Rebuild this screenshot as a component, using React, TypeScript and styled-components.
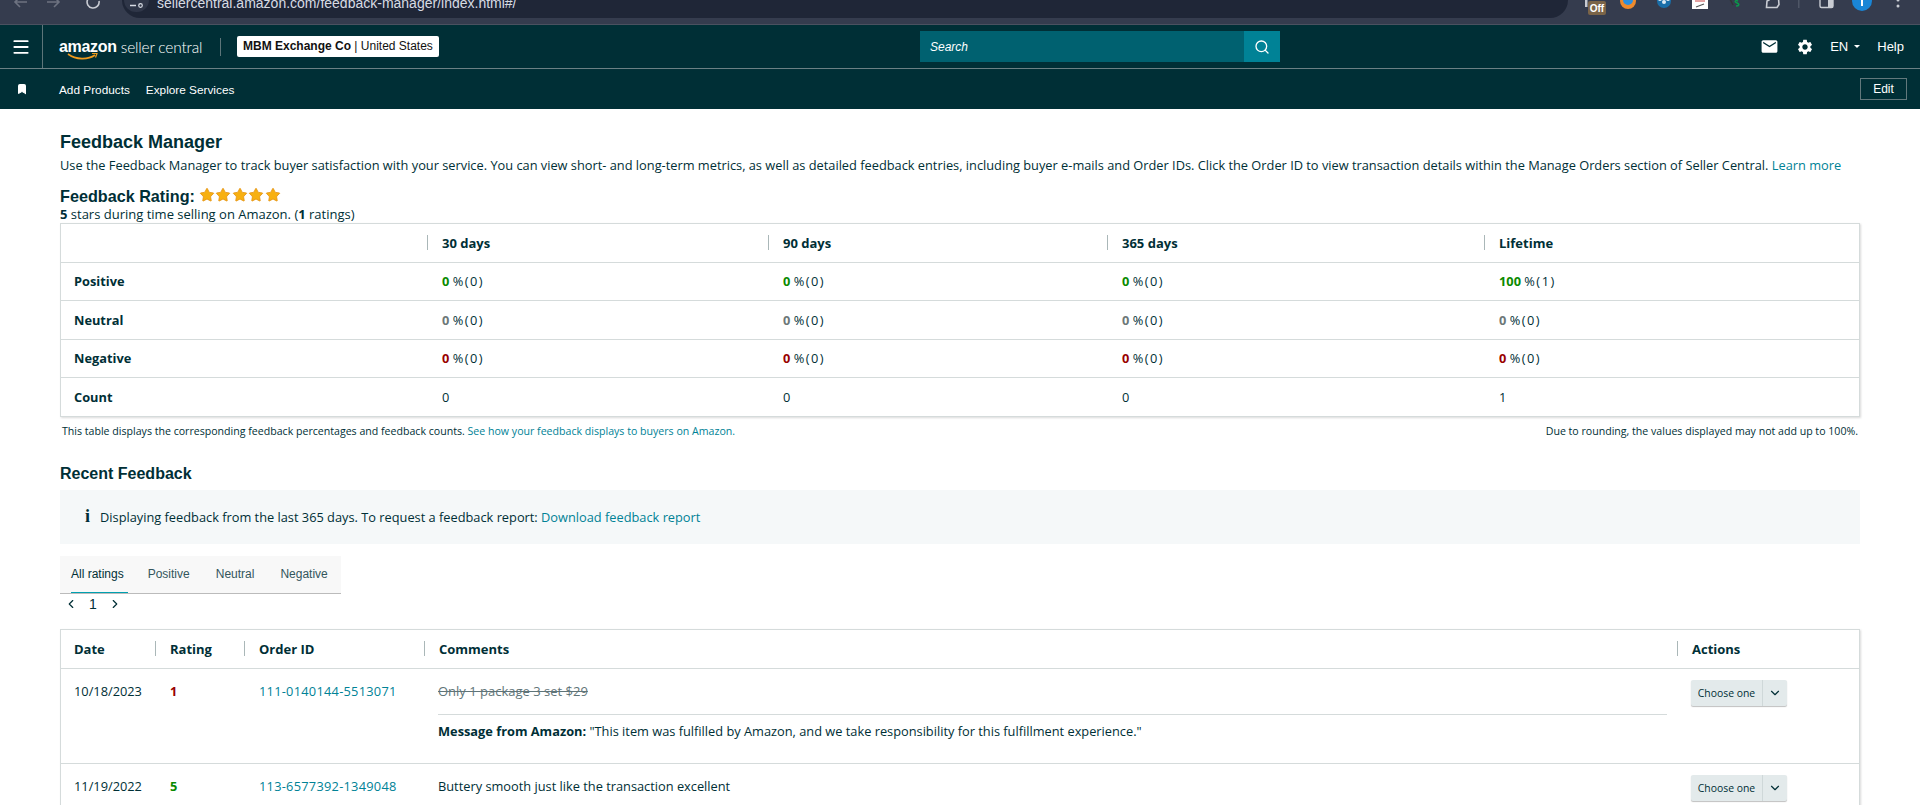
import React from 'react';
import styled, { createGlobalStyle } from 'styled-components';
import { Bookmark, ChevronDown, ChevronLeft, ChevronRight, Menu, Search, Star } from 'lucide-react';

const GlobalStyle = createGlobalStyle`
  html, body {
    margin: 0;
    padding: 0;
    height: 805px;
    overflow: hidden;
    background: #fff;
  }
`;

const BODY_FONT = `"Open Sans", "DejaVu Sans", sans-serif`;
const NAV_FONT = `"Liberation Sans", Arial, sans-serif`;

const Page = styled.div`
  width: 1920px;
  height: 805px;
  overflow: hidden;
  font-family: ${BODY_FONT};
  color: #002f36;
`;

/* browser chrome, cut off at the top of the shot */
const ChromeBar = styled.div`
  height: 24px;
  background: #353c4e;
  border-bottom: 1px solid #4b5160;
  display: flex;
  align-items: flex-start;
  overflow: hidden;
`;

const ChromeDrawing = styled.svg`
  flex: none;
  display: block;
`;

const Omnibox = styled.div`
  width: 1446px;
  flex: none;
  height: 18px;
  background: #1f2637;
  border-radius: 0 0 18px 18px;
  overflow: hidden;
  display: flex;
  align-items: flex-start;
  font: 14px/18px ${NAV_FONT};
  color: #d7dbe3;
  box-sizing: border-box;
`;

const SiteChip = styled.div`
  width: 25px;
  height: 12px;
  flex: none;
  margin-left: 2px;
  background: #2f3648;
  border-radius: 0 0 12px 12px;
  display: flex;
  align-items: flex-end;
  justify-content: center;
  padding-bottom: 4px;
  box-sizing: border-box;
`;

const UrlText = styled.div`
  margin: -6px 0 0 8px;
`;

const Nav = styled.div`
  height: 43px;
  background: #002f36;
  border-bottom: 1px solid #6b8084;
  display: flex;
  align-items: center;
  color: #fff;
  font-family: ${NAV_FONT};
`;

const Burger = styled.div`
  width: 42px;
  height: 100%;
  border-right: 1px solid #5d7579;
  display: flex;
  align-items: center;
  justify-content: center;
`;

const Logo = styled.div`
  margin-left: 16px;
  width: 143px;
  position: relative;
  display: flex;
  align-items: center;
  gap: 4px;
  white-space: nowrap;
`;

const LogoMark = styled.b`
  font-size: 16px;
  font-weight: 700;
  letter-spacing: -0.3px;
`;

const LogoName = styled.span`
  font: 300 15.5px "Lato", ${NAV_FONT};
  letter-spacing: -0.2px;
`;

const LogoSmile = styled.svg`
  position: absolute;
  left: 8px;
  top: 15px;
`;

const NavDivider = styled.div`
  width: 1px;
  height: 18px;
  background: #5d7579;
  margin: 0 16px 0 18px;
`;

const StoreBadge = styled.div`
  background: #fff;
  color: #111;
  border-radius: 2px;
  width: 202px;
  height: 21px;
  line-height: 21px;
  padding-left: 6px;
  box-sizing: border-box;
  font-size: 12px;
  white-space: nowrap;
  b { font-weight: 700; }
`;

const SearchBox = styled.div`
  margin-left: 481px;
  width: 360px;
  height: 31px;
  background: #006170;
  display: flex;
  align-items: center;
  justify-content: space-between;
  font: italic 12px ${NAV_FONT};
  padding-left: 10px;
  box-sizing: border-box;
`;

const SearchButton = styled.div`
  width: 36px;
  height: 31px;
  background: #008296;
  display: flex;
  align-items: center;
  justify-content: center;
`;

const NavRight = styled.div`
  margin-left: auto;
  display: flex;
  align-items: center;
  padding-right: 16px;
  font-size: 13px;
`;

const NavIcon = styled.svg<{ $gap: number }>`
  display: block;
  fill: #fff;
  margin-right: ${(p) => p.$gap}px;
`;

const Language = styled.span`
  display: flex;
  align-items: center;
  margin-right: 17px;
  &::after {
    content: '';
    margin-left: 6px;
    border-left: 3.5px solid transparent;
    border-right: 3.5px solid transparent;
    border-top: 3.5px solid #fff;
  }
`;

const SubNav = styled.div`
  height: 40px;
  background: #002f36;
  display: flex;
  align-items: center;
  color: #fff;
  font: 11.8px ${NAV_FONT};
`;

const PinCell = styled.div`
  width: 59px;
  padding-left: 16px;
  box-sizing: border-box;
  display: flex;
`;

const SubLink = styled.span`
  margin-right: 16px;
  padding-top: 2px;
`;

const EditButton = styled.div`
  margin-left: auto;
  margin-right: 13px;
  width: 47px;
  height: 22px;
  box-sizing: border-box;
  border: 1px solid #62787c;
  font-size: 12px;
  text-align: center;
  line-height: 20px;
`;

const Content = styled.div`
  padding: 23px 0 0 60px;
  width: 1860px;
  box-sizing: border-box;
`;

const Heading = styled.div`
  font-size: 18px;
  line-height: 20px;
  font-weight: 700;
  font-family: ${NAV_FONT};
`;

const Intro = styled.div`
  font-size: 12.8px;
  line-height: 18px;
  margin-top: 4px;
  white-space: nowrap;
`;

const Link = styled.a`
  color: #008296;
  text-decoration: none;
`;

const OrderLink = styled(Link)`
  letter-spacing: 0.26px;
`;

const RatingLine = styled.div`
  display: flex;
  align-items: center;
  margin-top: 13px;
  font: 700 16.2px/18px ${NAV_FONT};
`;

const Stars = styled.span`
  display: inline-flex;
  gap: 0.5px;
  margin-left: 4px;
  margin-top: -3px;
`;

const RatingNote = styled.div`
  font-size: 13px;
  line-height: 14px;
  margin-top: 2px;
`;

const Card = styled.div`
  border: 1px solid #d5dbdb;
  box-shadow: 1px 1px 2px rgba(0, 0, 0, 0.15);
`;

const SummaryCard = styled(Card)`
  margin-top: 2px;
`;

const Row = styled.div<{ $cols: string; $height: number }>`
  display: grid;
  grid-template-columns: ${(p) => p.$cols};
  min-height: ${(p) => p.$height}px;
  border-bottom: 1px solid #d5dbdb;
  &:last-child { border-bottom: none; }
`;

const HeadCell = styled.div<{ $divider?: boolean }>`
  position: relative;
  font-size: 13px;
  font-weight: 700;
  padding-left: ${(p) => (p.$divider ? 15 : 13)}px;
  display: flex;
  align-items: center;
  &::before {
    content: '';
    display: ${(p) => (p.$divider ? 'block' : 'none')};
    position: absolute;
    left: 0;
    top: 11px;
    bottom: 12px;
    width: 1px;
    background: #aab7b8;
  }
`;

const Cell = styled.div<{ $bold?: boolean; $top?: boolean; $first?: boolean }>`
  font-size: 12.8px;
  font-weight: ${(p) => (p.$bold ? 700 : 400)};
  padding-left: ${(p) => (p.$first ? 13 : 15)}px;
  display: flex;
  align-items: ${(p) => (p.$top ? 'flex-start' : 'center')};
  padding-top: ${(p) => (p.$top ? 13 : 0)}px;
  line-height: 18px;
  white-space: pre;
`;

const Value = styled.b<{ $tone: string }>`
  color: ${(p) => p.$tone};
`;

const Percent = styled.span`
  letter-spacing: 1.5px;
`;

const Footnote = styled.div`
  display: flex;
  justify-content: space-between;
  font-size: 10.6px;
  line-height: 14px;
  margin-top: 7px;
  padding: 0 2px;
`;

const SubHeading = styled(Heading)`
  font-size: 16px;
  margin-top: 26px;
`;

const Notice = styled.div`
  background: #f5f8f9;
  height: 54px;
  margin-top: 6px;
  display: flex;
  align-items: center;
  padding-left: 25px;
  font-size: 12.8px;
`;

const NoticeIcon = styled.span`
  font: 700 18px "Liberation Serif", serif;
  margin-right: 10px;
`;

const Tabs = styled.div`
  display: flex;
  width: 281px;
  height: 38px;
  margin-top: 12px;
  background: #f8f8f8;
  border-bottom: 1px solid #bbb;
  font: 12px ${NAV_FONT};
  padding-left: 11px;
  box-sizing: border-box;
  gap: 26px;
`;

const Tab = styled.div<{ $active?: boolean }>`
  height: 37px;
  box-sizing: border-box;
  line-height: 36px;
  padding-right: ${(p) => (p.$active ? 4 : 0)}px;
  margin-right: ${(p) => (p.$active ? -6 : 0)}px;
  color: ${(p) => (p.$active ? '#002f36' : '#33565c')};
  border-bottom: ${(p) => (p.$active ? '1px solid #00a0b0' : 'none')};
`;

const Pager = styled.div`
  display: flex;
  align-items: center;
  height: 20px;
  padding-left: 4px;
  font: 14px ${NAV_FONT};
  gap: 11px;
`;

const FeedbackCard = styled(Card)`
  margin-top: 15px;
`;

const Strike = styled.span`
  font-size: 13px;
  text-decoration: line-through;
  color: #5f7478;
`;

const CommentCell = styled.div`
  font-size: 12.8px;
  line-height: 18px;
  padding: 13px 10px 0 14px;
`;

const CommentRule = styled.div`
  height: 1px;
  background: #d5dbdb;
  margin: 14px 0 7px;
`;

const SplitButton = styled.div`
  display: inline-flex;
  height: 26px;
  background: #e3eaeb;
  border-radius: 2px;
  box-shadow: 0 1px 1px rgba(0, 0, 0, 0.25);
  font-size: 10.4px;
  align-items: center;
  margin: 11px 0 0 14px;
`;

const SplitLabel = styled.span`
  width: 72px;
  box-sizing: border-box;
  text-align: center;
  border-right: 1px solid #cfd8d9;
  line-height: 26px;
`;

const SplitCaret = styled.span`
  width: 24px;
  display: flex;
  justify-content: center;
`;

const SummaryCols = '366px 341px 339px 377px 1fr';
const FeedbackCols = '94px 89px 180px 1253px 1fr';

const summary = [
  { label: 'Positive', tone: '#0a8a00', values: ['0 ', '0 ', '0 ', '100 '], counts: [0, 0, 0, 1] },
  { label: 'Neutral', tone: '#6c7778', values: ['0 ', '0 ', '0 ', '0 '], counts: [0, 0, 0, 0] },
  { label: 'Negative', tone: '#990000', values: ['0 ', '0 ', '0 ', '0 '], counts: [0, 0, 0, 0] },
];

const Choose = () => (
  <SplitButton>
    <SplitLabel>Choose one</SplitLabel>
    <SplitCaret>
      <ChevronDown size={14} strokeWidth={2} />
    </SplitCaret>
  </SplitButton>
);

const ChromeLeft = () => (
  <ChromeDrawing width="122" height="24" viewBox="0 0 122 24" fill="none">
    <path d="M27 2H15M20 -3l-5 5 5 5" stroke="#6d7280" strokeWidth="1.6" />
    <path d="M47 2h12M54 -3l5 5-5 5" stroke="#6d7280" strokeWidth="1.6" />
    <path d="M99 1a6 6 0 1 1-2-3.5" stroke="#c9ccd3" strokeWidth="1.6" />
  </ChromeDrawing>
);

const ChromeTray = () => (
  <ChromeDrawing width="352" height="24" viewBox="1568 0 352 24" fill="none">
    <rect x="1585" y="-3" width="2.5" height="10" fill="#c9ccd3" />
    <rect x="1588" y="1" width="18" height="14" rx="2" fill="#7a6448" />
    <text x="1597" y="12" textAnchor="middle" fill="#fff" fontFamily="Liberation Sans" fontWeight="700" fontSize="10">Off</text>
    <circle cx="1628" cy="1" r="8" fill="#ee8a2d" />
    <circle cx="1628" cy="0" r="5" fill="#2a8fe0" />
    <circle cx="1664" cy="1" r="7" fill="#1a6ea8" />
    <circle cx="1664" cy="2" r="2" fill="#dfeaf2" />
    <circle cx="1660" cy="-1" r="2" fill="#dfeaf2" />
    <circle cx="1668" cy="-1" r="2" fill="#dfeaf2" />
    <rect x="1692" y="-2" width="16" height="11" fill="#fff" />
    <path d="M1696 7l8-3" stroke="#555" strokeWidth="1.2" />
    <path d="M1695 1h10" stroke="#c44" strokeWidth="1" />
    <path d="M1730 -1l3 6" stroke="#333" strokeWidth="1.4" />
    <path d="M1738 1c-3-1-4 1-1 2s2 3-1 3" stroke="#0a9a4a" strokeWidth="1.4" />
    <path d="M1769 -2v2l-2 1-.5 6.500h10.500l2-3-.5-6" stroke="#c9ccd3" strokeWidth="1.6" />
    <rect x="1798" y="-2" width="1.500" height="10" fill="#4f5666" />
    <rect x="1820" y="-3" width="13" height="10.500" rx="1.500" stroke="#c9ccd3" strokeWidth="1.4" />
    <rect x="1828" y="-3" width="5" height="10.500" fill="#c9ccd3" />
    <circle cx="1862" cy="1" r="10" fill="#1a86d6" />
    <rect x="1861" y="-2" width="2" height="8" fill="#fff" />
    <circle cx="1898" cy="0" r="1.500" fill="#c9ccd3" />
    <circle cx="1898" cy="6" r="1.500" fill="#c9ccd3" />
  </ChromeDrawing>
);

export default function App() {
  return (
    <Page>
      <GlobalStyle />
      <ChromeBar>
        <ChromeLeft />
        <Omnibox>
          <SiteChip>
            <svg width="14" height="5" viewBox="0 0 14 5" fill="none">
              <path d="M0 2.500h6" stroke="#d7dbe3" strokeWidth="1.6" />
              <circle cx="10.500" cy="2.500" r="1.800" stroke="#d7dbe3" strokeWidth="1.2" />
            </svg>
          </SiteChip>
          <UrlText>sellercentral.amazon.com/feedback-manager/index.html#/</UrlText>
        </Omnibox>
        <ChromeTray />
      </ChromeBar>
      <Nav>
        <Burger>
          <Menu size={20} color="#fff" strokeWidth={2.2} />
        </Burger>
        <Logo>
          <LogoMark>amazon</LogoMark>
          <LogoName>seller central</LogoName>
          <LogoSmile width="32" height="8" viewBox="0 0 32 8" fill="none">
            <path d="M1 1c8 6 20 6 27 1" stroke="#f29b1d" strokeWidth="1.6" />
            <path d="M25 0.500l5 0-1.500 4" stroke="#f29b1d" strokeWidth="1.2" />
          </LogoSmile>
        </Logo>
        <NavDivider />
        <StoreBadge>
          <b>MBM Exchange Co</b> | United States
        </StoreBadge>
        <SearchBox>
          Search
          <SearchButton>
            <Search size={16} color="#fff" />
          </SearchButton>
        </SearchBox>
        <NavRight>
          <NavIcon $gap={17} width="19" height="19" viewBox="0 0 24 24">
            <path d="M20 4H4c-1.1 0-2 .9-2 2v12c0 1.100.9 2 2 2h16c1.100 0 2-.9 2-2V6c0-1.100-.9-2-2-2zm0 4l-8 5-8-5V6l8 5 8-5v2z" />
          </NavIcon>
          <NavIcon $gap={16} width="18" height="18" viewBox="0 0 24 24">
            <path d="M19.140 12.940c.04-.3.06-.61.06-.94 0-.32-.02-.64-.07-.94l2.030-1.580c.18-.14.23-.41.12-.61l-1.920-3.320c-.12-.22-.37-.29-.59-.22l-2.390.96c-.5-.38-1.030-.7-1.620-.94l-.36-2.540c-.04-.24-.24-.41-.48-.41h-3.840c-.24 0-.43.17-.47.41l-.36 2.540c-.59.24-1.130.57-1.620.94l-2.390-.96c-.22-.08-.47 0-.59.22L2.740 8.870c-.12.21-.08.47.12.61l2.030 1.580c-.05.3-.09.63-.09.94s.02.64.07.94l-2.030 1.580c-.18.14-.23.41-.12.61l1.920 3.320c.12.22.37.29.59.22l2.390-.96c.5.38 1.030.7 1.620.94l.36 2.540c.05.24.24.41.48.41h3.840c.24 0 .44-.17.47-.41l.36-2.540c.59-.24 1.130-.56 1.620-.94l2.390.96c.22.08.47 0 .59-.22l1.920-3.320c.12-.22.07-.47-.12-.61l-2.010-1.580zM12 15.600c-1.980 0-3.600-1.620-3.600-3.600s1.620-3.600 3.600-3.600 3.600 1.620 3.600 3.600-1.620 3.600-3.600 3.600z" />
          </NavIcon>
          <Language>EN</Language>
          <span>Help</span>
        </NavRight>
      </Nav>
      <SubNav>
        <PinCell>
          <Bookmark size={12} fill="#fff" color="#fff" />
        </PinCell>
        <SubLink>Add Products</SubLink>
        <SubLink>Explore Services</SubLink>
        <EditButton>Edit</EditButton>
      </SubNav>
      <Content>
        <Heading>Feedback Manager</Heading>
        <Intro>
          Use the Feedback Manager to track buyer satisfaction with your service. You can view short- and long-term metrics, as well as detailed feedback entries, including buyer e-mails and Order IDs. Click the Order ID to view transaction details within the Manage Orders section of Seller Central. <Link>Learn more</Link>
        </Intro>
        <RatingLine>
          Feedback Rating:
          <Stars>
            {[0, 1, 2, 3, 4].map((i) => (
              <Star key={i} size={16} fill="#f7b011" color="#e38f0c" strokeWidth={1.2} />
            ))}
          </Stars>
        </RatingLine>
        <RatingNote>
          <b>5</b> stars during time selling on Amazon. (<b>1</b> ratings)
        </RatingNote>
        <SummaryCard>
          <Row $cols={SummaryCols} $height={37.5}>
            <HeadCell />
            <HeadCell $divider>30 days</HeadCell>
            <HeadCell $divider>90 days</HeadCell>
            <HeadCell $divider>365 days</HeadCell>
            <HeadCell $divider>Lifetime</HeadCell>
          </Row>
          {summary.map((r) => (
            <Row key={r.label} $cols={SummaryCols} $height={37.5}>
              <Cell $bold $first>{r.label}</Cell>
              {r.values.map((v, i) => (
                <Cell key={i}>
                  <Value $tone={r.tone}>{v}</Value>
                  <Percent>%({r.counts[i]})</Percent>
                </Cell>
              ))}
            </Row>
          ))}
          <Row $cols={SummaryCols} $height={37.5}>
            <Cell $bold $first>Count</Cell>
            <Cell>0</Cell>
            <Cell>0</Cell>
            <Cell>0</Cell>
            <Cell>1</Cell>
          </Row>
        </SummaryCard>
        <Footnote>
          <span>
            This table displays the corresponding feedback percentages and feedback counts. <Link>See how your feedback displays to buyers on Amazon.</Link>
          </span>
          <span>Due to rounding, the values displayed may not add up to 100%.</span>
        </Footnote>
        <SubHeading>Recent Feedback</SubHeading>
        <Notice>
          <NoticeIcon>i</NoticeIcon>
          Displaying feedback from the last 365 days. To request a feedback report:&nbsp;<Link>Download feedback report</Link>
        </Notice>
        <Tabs>
          <Tab $active>All ratings</Tab>
          <Tab>Positive</Tab>
          <Tab>Neutral</Tab>
          <Tab>Negative</Tab>
        </Tabs>
        <Pager>
          <ChevronLeft size={14} strokeWidth={2} />
          1
          <ChevronRight size={14} strokeWidth={2} />
        </Pager>
        <FeedbackCard>
          <Row $cols={FeedbackCols} $height={38}>
            <HeadCell>Date</HeadCell>
            <HeadCell $divider>Rating</HeadCell>
            <HeadCell $divider>Order ID</HeadCell>
            <HeadCell $divider>Comments</HeadCell>
            <HeadCell $divider>Actions</HeadCell>
          </Row>
          <Row $cols={FeedbackCols} $height={94}>
            <Cell $top $first>10/18/2023</Cell>
            <Cell $top>
              <Value $tone="#990000">1</Value>
            </Cell>
            <Cell $top>
              <OrderLink>111-0140144-5513071</OrderLink>
            </Cell>
            <CommentCell>
              <Strike>Only 1 package 3 set $29</Strike>
              <CommentRule />
              <b>Message from Amazon:</b> "This item was fulfilled by Amazon, and we take responsibility for this fulfillment experience."
            </CommentCell>
            <div>
              <Choose />
            </div>
          </Row>
          <Row $cols={FeedbackCols} $height={60}>
            <Cell $top $first>11/19/2022</Cell>
            <Cell $top>
              <Value $tone="#0a8a00">5</Value>
            </Cell>
            <Cell $top>
              <OrderLink>113-6577392-1349048</OrderLink>
            </Cell>
            <CommentCell>Buttery smooth just like the transaction excellent</CommentCell>
            <div>
              <Choose />
            </div>
          </Row>
        </FeedbackCard>
      </Content>
    </Page>
  );
}
